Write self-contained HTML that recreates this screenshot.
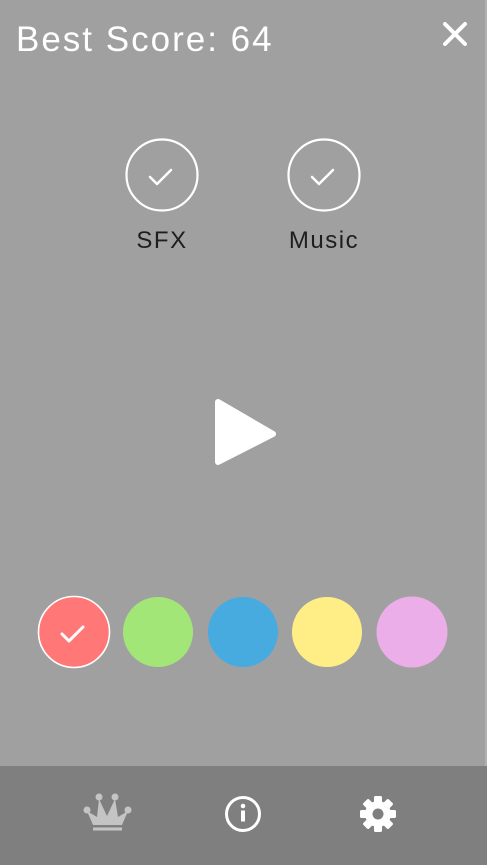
<!DOCTYPE html>
<html><head><style>
html,body{margin:0;padding:0}
body{width:487px;height:865px;background:#a0a0a0;position:relative;overflow:hidden;font-family:"Liberation Sans",sans-serif}
.t{position:absolute;left:16px;top:20px;font-size:35px;color:#fff;letter-spacing:2px}
.lbl{position:absolute;top:227px;font-size:24px;color:#1e1e1e;width:120px;text-align:center;letter-spacing:1.5px}
.foot{position:absolute;left:0;top:766px;width:487px;height:99px;background:#7f7f7f}
.edge{position:absolute;right:0;top:0;width:2px;height:766px;background:#b0b0b0}
</style></head><body>
<div class="edge"></div>
<div class="t">Best Score: 64</div>
<svg style="position:absolute;left:441px;top:20px" width="28" height="28"><path d="M4 4L24 24M24 4L4 24" stroke="#fff" stroke-width="4" stroke-linecap="round"/></svg>
<svg style="position:absolute;left:0;top:0" width="487" height="766">
<circle cx="162" cy="175" r="35.5" fill="none" stroke="#fff" stroke-width="2.2"/>
<path d="M150 177L157 184L171 170" fill="none" stroke="#fff" stroke-width="2.5" stroke-linecap="round" stroke-linejoin="round"/>
<circle cx="324" cy="175" r="35.5" fill="none" stroke="#fff" stroke-width="2.2"/>
<path d="M312 177L319 184L333 170" fill="none" stroke="#fff" stroke-width="2.5" stroke-linecap="round" stroke-linejoin="round"/>
<path d="M218 402L218 462L273 434Z" fill="#fff" stroke="#fff" stroke-width="6" stroke-linejoin="round"/>
<circle cx="74" cy="632" r="35.5" fill="#ff7777" stroke="#fff" stroke-width="1.6"/>
<path d="M62 634L69 641L83 627" fill="none" stroke="#fff" stroke-width="3" stroke-linecap="round" stroke-linejoin="round"/>
<circle cx="158" cy="632" r="35" fill="#a2e677"/>
<circle cx="243" cy="632" r="35" fill="#47abe0"/>
<circle cx="327" cy="632" r="35" fill="#ffee86"/>
<circle cx="412" cy="632" r="35.5" fill="#ebaee8"/>
</svg>
<div class="lbl" style="left:102px">SFX</div>
<div class="lbl" style="left:264px">Music</div>
<div class="foot"></div>
<svg style="position:absolute;left:0;top:766px" width="487" height="99">
<g fill="#c4c4c4">
<circle cx="87" cy="44" r="3.5"/><circle cx="99" cy="31" r="3.5"/><circle cx="115" cy="31" r="3.5"/><circle cx="128" cy="44" r="3.5"/>
<path d="M87 45L93 59H122L128 45L118 51L115 33L107 50L99 33L97 51Z"/>
<rect x="93" y="61.5" width="29" height="3"/>
</g>
<circle cx="243" cy="48" r="16.5" fill="none" stroke="#fff" stroke-width="3"/>
<circle cx="243" cy="40" r="2.3" fill="#fff"/>
<rect x="241" y="44.5" width="4" height="11" fill="#fff"/>
<g transform="translate(378,48)" fill="#fff">
<circle r="13"/>
<g id="tt"><rect x="-4" y="-18" width="8" height="8" rx="1.5"/></g>
<use href="#tt" transform="rotate(45)"/><use href="#tt" transform="rotate(90)"/><use href="#tt" transform="rotate(135)"/><use href="#tt" transform="rotate(180)"/><use href="#tt" transform="rotate(225)"/><use href="#tt" transform="rotate(270)"/><use href="#tt" transform="rotate(315)"/>
<circle r="5.5" fill="#7f7f7f"/>
</g>
</svg>
</body></html>
